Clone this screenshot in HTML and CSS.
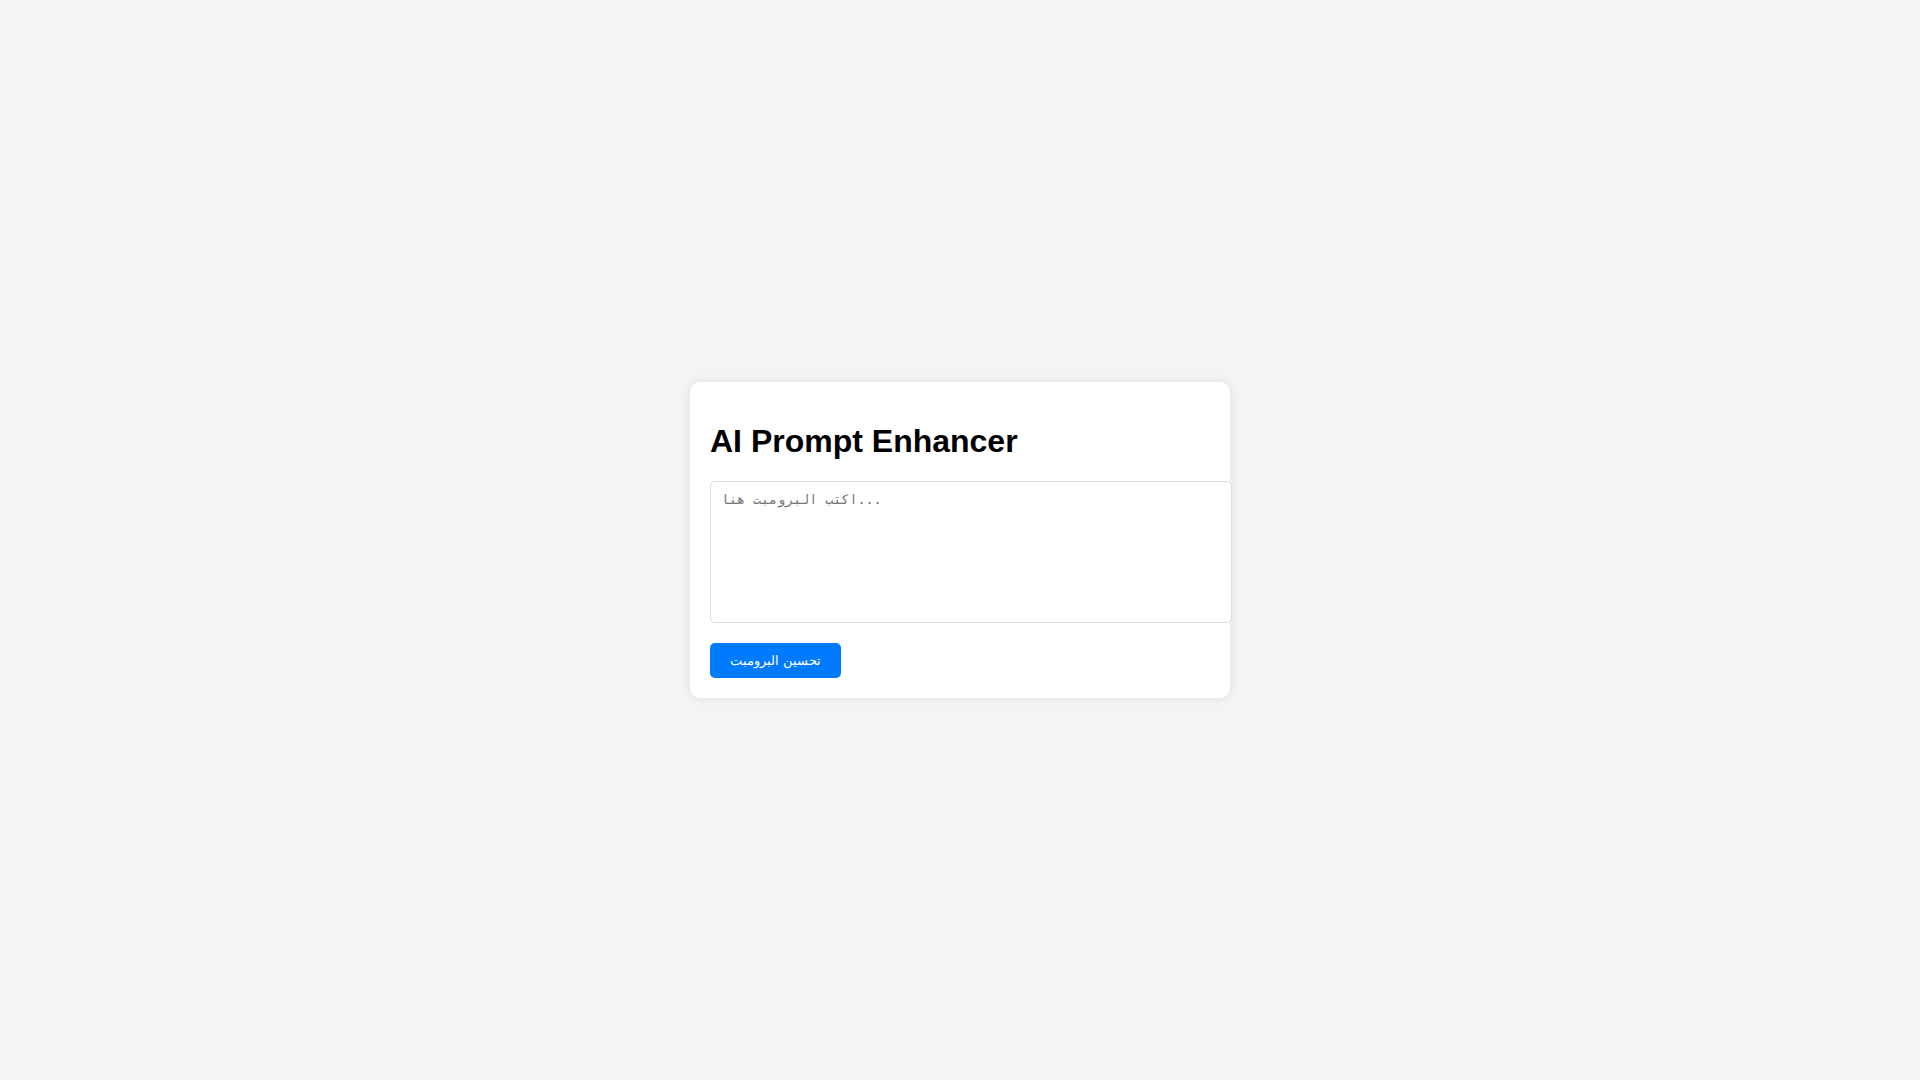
FILE: index.html
```html
<!DOCTYPE html>
<html lang="en">
<head>
    <meta charset="UTF-8">
    <meta name="viewport" content="width=device-width, initial-scale=1.0">
    <title>AI Prompt Enhancer</title>
    <link rel="stylesheet" href="styles.css">
</head>
<body>
    <div class="container">
        <h1>AI Prompt Enhancer</h1>
        <textarea id="prompt" placeholder="اكتب البرومبت هنا..."></textarea>
        <button type="button">تحسين البرومبت</button>
    </div>
</body>
</html>
```
FILE: styles.css
```css
body {
    font-family: Arial, "Liberation Sans", sans-serif;
    background-color: #f4f4f4;
    margin: 0;
    min-height: 100vh;
    display: flex;
    align-items: center;
    justify-content: center;
}
.container {
    width: 500px;
    padding: 20px;
    background-color: #fff;
    border-radius: 10px;
    box-shadow: 0 0 10px rgba(0, 0, 0, 0.1);
}
h1 {
    font-size: 32px;
    margin: 0.67em 0;
}
textarea {
    display: block;
    width: 100%;
    height: 120px;
    padding: 10px;
    border: 1px solid #ddd;
    border-radius: 5px;
    margin-bottom: 20px;
    resize: none;
}
button {
    background-color: #007bff;
    color: #fff;
    border: none;
    border-radius: 5px;
    padding: 10px 20px;
    cursor: pointer;
}
button:hover {
    background-color: #0056b3;
}
```
